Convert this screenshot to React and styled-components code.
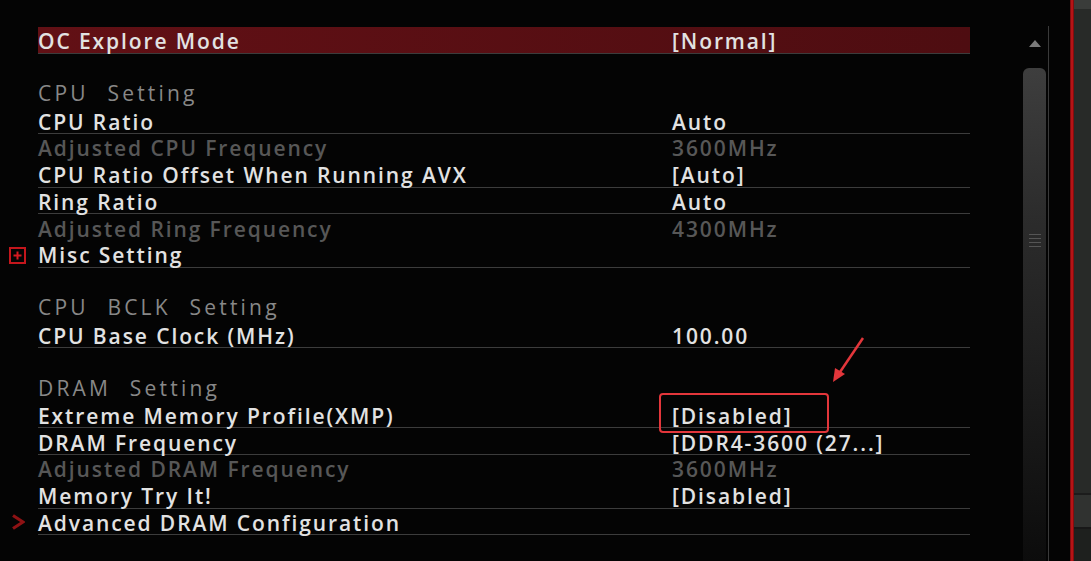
import React from "react";
import styled, { createGlobalStyle } from "styled-components";

const GlobalStyle = createGlobalStyle`
  html, body {
    margin: 0;
    padding: 0;
    background: #040404;
    overflow: hidden;
  }
  body {
    font-family: "Open Sans", "DejaVu Sans", sans-serif;
  }
`;

const Screen = styled.div`
  width: 1091px;
  height: 561px;
  display: flex;
  background: #040404;
  overflow: hidden;
`;

const List = styled.div`
  width: 970px;
  padding-top: 27px;
  display: flex;
  flex-direction: column;
`;

const Row = styled.div`
  display: flex;
  height: 26.75px;
`;

const Marker = styled.div`
  width: 38px;
  display: flex;
  align-items: center;
  justify-content: center;
  padding-right: 3px;
  box-sizing: border-box;
`;

const Body = styled.div`
  flex: 1;
  display: grid;
  grid-template-columns: 634px 1fr;
  align-items: center;
  box-sizing: border-box;
  border-bottom: 1px solid ${(p) => (p.$line ? "#3c3c3c" : "transparent")};
  background: ${(p) =>
    p.$active ? "linear-gradient(90deg, #621015 0%, #4e0d11 100%)" : "none"};
  color: ${(p) => (p.$dim ? "#575757" : "#e2e2e2")};
  font-size: 21px;
  font-weight: 600;
  letter-spacing: 1.9px;
  line-height: 1;
  padding-top: 4px;
`;

const Header = styled.div`
  flex: 1;
  display: flex;
  align-items: center;
  color: #888;
  font-size: 21px;
  letter-spacing: 3.2px;
  word-spacing: 10px;
  white-space: pre;
  padding-bottom: 1px;
`;

const Label = styled.span`
  white-space: nowrap;
`;

const Value = styled.span`
  position: relative;
  white-space: nowrap;
`;

const PlusBox = styled.span`
  width: 17px;
  height: 17px;
  border: 2px solid #c4161c;
  box-sizing: border-box;
  display: flex;
  align-items: center;
  justify-content: center;
  margin-top: 2px;
`;

const Callout = styled.span`
  position: absolute;
  left: -13px;
  top: -13px;
  width: 170px;
  height: 40px;
  border: 2.5px solid #e3363b;
  border-radius: 4px;
  box-sizing: border-box;
`;

const Arrow = styled.svg`
  position: absolute;
  left: 160px;
  top: -69px;
  overflow: visible;
`;

const ScrollArea = styled.div`
  width: 100px;
  display: flex;
  justify-content: flex-end;
  padding-right: 21px;
  box-sizing: border-box;
`;

const Track = styled.div`
  width: 27px;
  margin-top: 26px;
  border-right: 1px solid #3a3a3a;
  display: flex;
  flex-direction: column;
  align-items: center;
`;

const UpArrow = styled.div`
  margin-top: 14px;
  width: 0;
  height: 0;
  border-left: 6px solid transparent;
  border-right: 6px solid transparent;
  border-bottom: 7px solid #7a7a7a;
`;

const Thumb = styled.div`
  margin-top: 21px;
  width: 23px;
  flex: 1;
  border-radius: 6px 6px 0 0;
  background: linear-gradient(
    180deg,
    #3e3e3e 0%,
    #2c2c2c 30%,
    #1a1a1a 70%,
    #0c0c0c 100%
  );
  display: flex;
  flex-direction: column;
  align-items: center;
  padding-top: 166px;
  box-sizing: border-box;
  gap: 3px;
`;

const Grip = styled.span`
  width: 12px;
  height: 1px;
  background: #555;
`;

const RedEdge = styled.div`
  width: 4px;
  background: linear-gradient(90deg, #6a0a0a, #d0161a 50%, #6a0a0a);
`;

const Side = styled.div`
  flex: 1;
  display: flex;
  flex-direction: column;
  background: #282a28;
`;

const SideTop = styled.div`
  height: 9px;
  background: #3a3c3a;
`;

const SideFill = styled.div`
  flex: 1;
`;

const SideBand = styled.div`
  height: 32px;
  background: #303230;
  border-top: 2px solid #1c1c1c;
  border-bottom: 2px solid #181818;
`;

const SideBottom = styled.div`
  height: 32px;
  background: #1e201e;
`;

const Plus = () => (
  <svg width="9" height="9" viewBox="0 0 9 9">
    <path d="M4.5 0.5 V8.5 M0.5 4.5 H8.5" stroke="#d41a20" strokeWidth="2" />
  </svg>
);

const Chevron = () => (
  <svg width="14" height="16" viewBox="0 0 14 16">
    <path d="M2 1.5 L12 8 L2 14.5" fill="none" stroke="#8e1214" strokeWidth="3.2" />
  </svg>
);

const rows = [
  { label: "OC Explore Mode", value: "[Normal]", active: true, line: true },
  { blank: true },
  { header: "CPU Setting" },
  { label: "CPU Ratio", value: "Auto", line: true },
  { label: "Adjusted CPU Frequency", value: "3600MHz", dim: true },
  { label: "CPU Ratio Offset When Running AVX", value: "[Auto]", line: true },
  { label: "Ring Ratio", value: "Auto", line: true },
  { label: "Adjusted Ring Frequency", value: "4300MHz", dim: true },
  { label: "Misc Setting", marker: "plus", line: true },
  { blank: true },
  { header: "CPU BCLK Setting" },
  { label: "CPU Base Clock (MHz)", value: "100.00", line: true },
  { blank: true },
  { header: "DRAM Setting" },
  { label: "Extreme Memory Profile(XMP)", value: "[Disabled]", line: true, callout: true },
  { label: "DRAM Frequency", value: "[DDR4-3600 (27...]", line: true },
  { label: "Adjusted DRAM Frequency", value: "3600MHz", dim: true },
  { label: "Memory Try It!", value: "[Disabled]", line: true },
  { label: "Advanced DRAM Configuration", marker: "chevron", line: true },
];

const App = () => {
  return (
    <>
      <GlobalStyle />
      <Screen>
        <List>
          {rows.map((r, i) => (
            <Row key={i}>
              <Marker>
                {r.marker === "plus" && (
                  <PlusBox>
                    <Plus />
                  </PlusBox>
                )}
                {r.marker === "chevron" && <Chevron />}
              </Marker>
              {r.header ? (
                <Header>{r.header}</Header>
              ) : r.blank ? null : (
                <Body $line={r.line} $active={r.active} $dim={r.dim}>
                  <Label>{r.label}</Label>
                  <Value>
                    {r.value}
                    {r.callout && (
                      <>
                        <Callout />
                        <Arrow width="34" height="46" viewBox="0 0 34 46">
                          <path d="M31 1 L6 38" stroke="#e3363b" strokeWidth="2.5" fill="none" />
                          <path d="M1 45 L3 31 L13 37 Z" fill="#e3363b" />
                        </Arrow>
                      </>
                    )}
                  </Value>
                </Body>
              )}
            </Row>
          ))}
        </List>
        <ScrollArea>
          <Track>
            <UpArrow />
            <Thumb>
              <Grip />
              <Grip />
              <Grip />
              <Grip />
            </Thumb>
          </Track>
        </ScrollArea>
        <RedEdge />
        <Side>
          <SideTop />
          <SideFill />
          <SideBand />
          <SideBottom />
        </Side>
      </Screen>
    </>
  );
};

export default App;
